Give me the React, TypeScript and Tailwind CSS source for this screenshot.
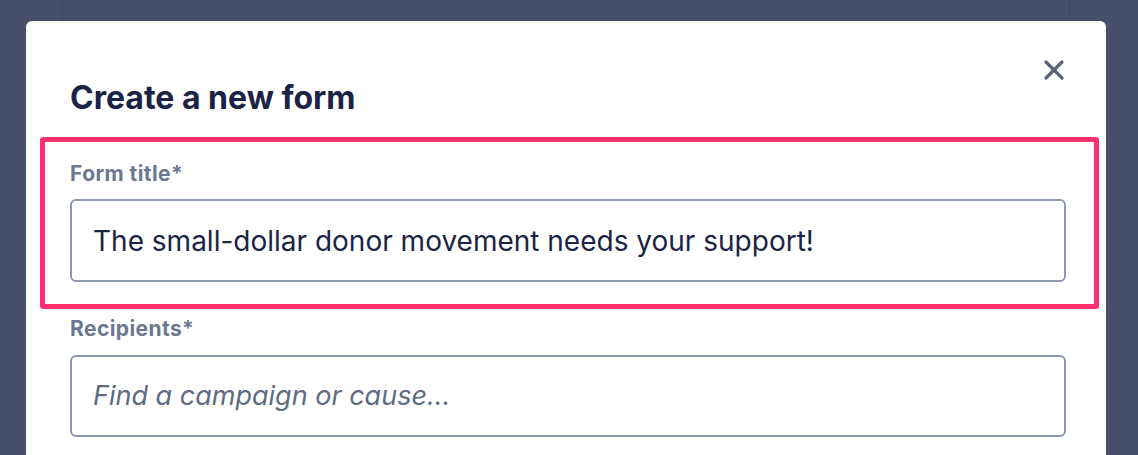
import { X } from "lucide-react";

const font = { fontFamily: "Inter, 'Noto Sans', sans-serif" };

export default function App() {
  return (
    <div
      className="relative h-[455px] w-[1138px] overflow-hidden bg-[#474f6a]"
      style={font}
    >
      {/* page behind the backdrop */}
      <div className="absolute inset-y-0 left-[62px] right-[68px] border-x border-[#40475f]" />

      <div className="relative pl-[26px] pr-[32px] pt-[21px]">
        <div className="relative h-[480px] rounded-md bg-white pl-[44px] pr-[40px] pt-[58px]">
          <button
            type="button"
            aria-label="Close"
            className="absolute right-[36px] top-[33px] text-[#5a6478]"
          >
            <X size={32} strokeWidth={2.4} />
          </button>

          <h2 className="text-[32px] font-bold leading-[38px] text-[#1b2445]">
            Create a new form
          </h2>

          {/* highlighted field */}
          <div className="-ml-[30px] -mr-[33px] mt-[20px] rounded-[3px] border-[5px] border-[#ff306f] pb-[22px] pl-[25px] pr-[28px] pt-[18px]">
            <label className="block text-[21px] font-bold leading-[28px] tracking-[0.02em] text-[#6b7890]">
              Form title*
            </label>
            <div className="mt-[11px] flex h-[83px] items-center rounded-md border-2 border-[#8e99ad] px-[21px] text-[28px] text-[#1b2445]">
              The small-dollar donor movement needs your support!
            </div>
          </div>

          <div className="pt-[6px]">
            <label className="block text-[21px] font-bold leading-[28px] tracking-[0.02em] text-[#6b7890]">
              Recipients*
            </label>
            <div className="mt-[12px] flex h-[82px] items-center rounded-md border-2 border-[#8e99ad] px-[21px] text-[27px] italic text-[#5f6b80]">
              Find a campaign or cause...
            </div>
          </div>
        </div>
      </div>
    </div>
  );
}
